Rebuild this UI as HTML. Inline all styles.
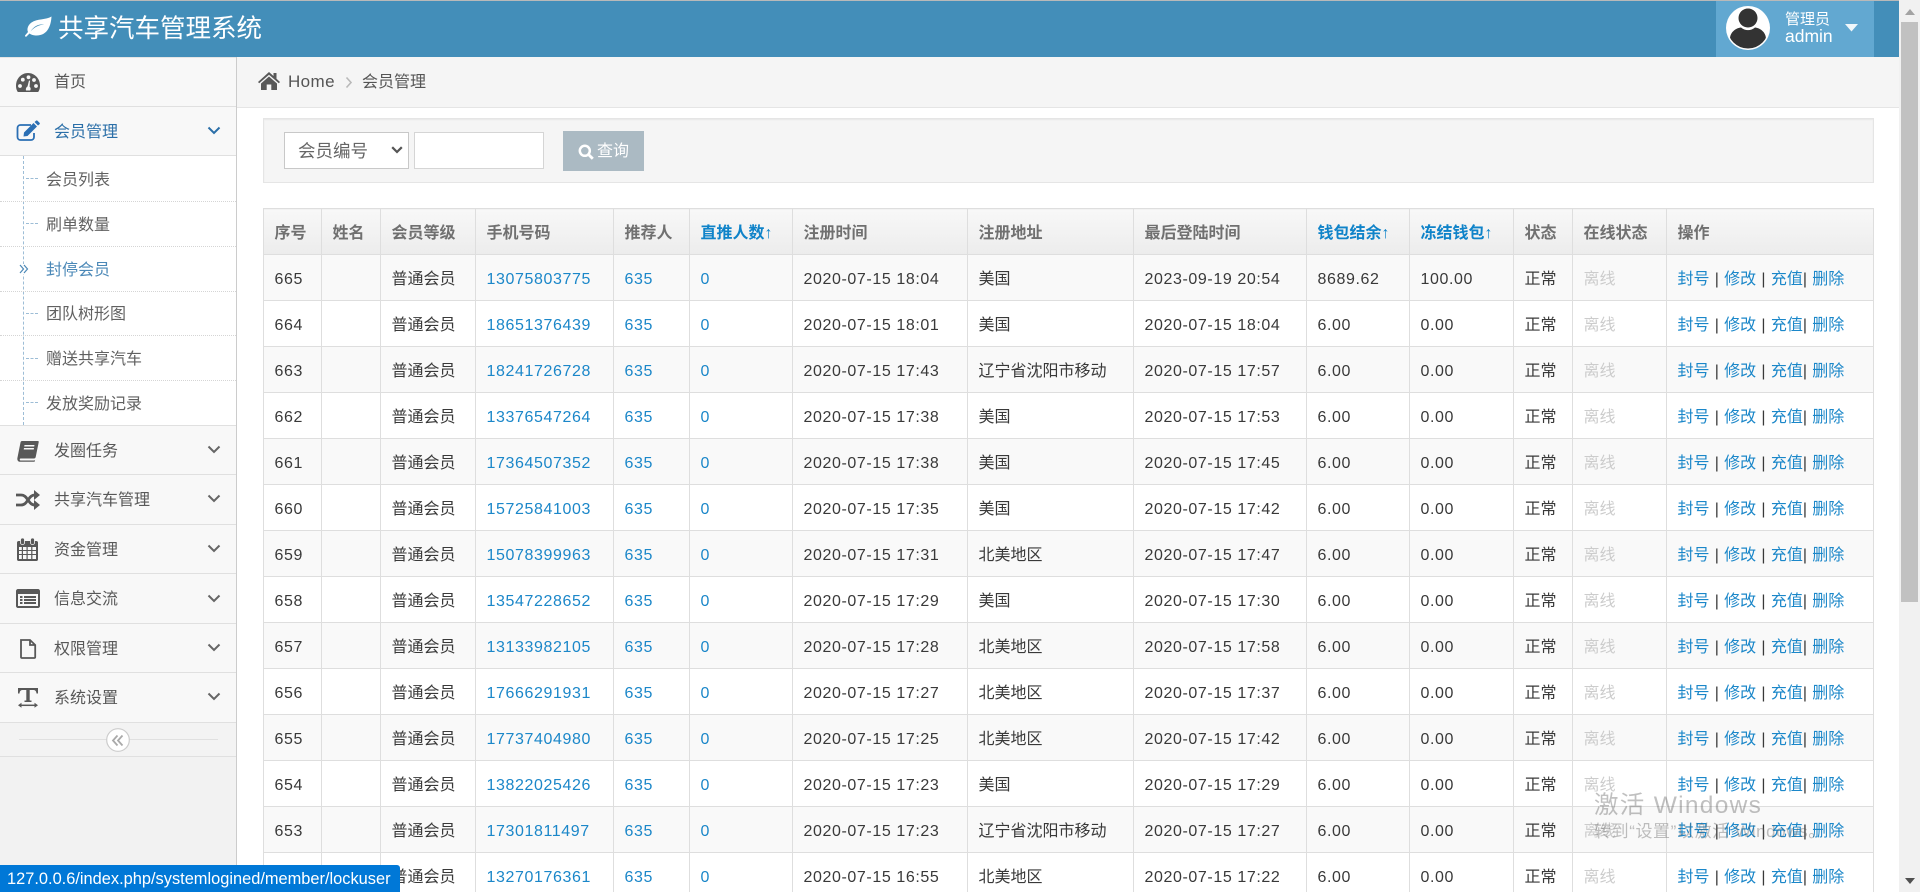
<!DOCTYPE html>
<html lang="zh-CN">
<head>
<meta charset="utf-8">
<title>共享汽车管理系统</title>
<style>
html,body{margin:0;padding:0;width:1920px;height:892px;overflow:hidden;background:#fff;}
body{position:relative;font-family:"Liberation Sans","Noto Sans CJK SC",sans-serif;font-size:16px;color:#393939;}
.a{position:absolute;white-space:nowrap;}
svg{position:absolute;display:block;overflow:visible;}
#nav{left:0;top:1px;width:1899px;height:56px;background:#438eb9;}
#topline{left:0;top:0;width:1899px;height:1px;background:#b9b9b9;}
#side{left:0;top:57px;width:236px;height:835px;background:#f2f2f2;border-right:1px solid #ccc;}
.mi{left:0;width:236px;background:#f8f8f8;border-bottom:1px solid #e0e0e0;box-sizing:content-box;}
.mt{left:54px;color:#585858;font-size:16px;line-height:24px;height:24px;}
.st{left:46px;color:#616161;font-size:16px;line-height:24px;height:24px;}
.dot{left:0;width:236px;height:0;border-top:1px dotted #d5d5d5;}
.dash{left:26px;width:12px;height:0;border-top:1px dashed #9dbdd6;}
#tbl{position:absolute;left:263px;top:208px;width:1610px;border-collapse:collapse;table-layout:fixed;}
#tbl th,#tbl td{border:1.5px solid #dedede;padding:0 0 0 10.5px;height:44.5px;text-align:left;white-space:nowrap;overflow:hidden;font-size:16px;line-height:22px;box-sizing:border-box;}
#tbl tr{height:46px;}
#tbl th{background:linear-gradient(#f8f8f8,#ececec);color:#707070;font-weight:bold;padding-top:4px;}
#tbl th.l{color:#0f83c9;}
#tbl td{letter-spacing:.6px;padding-top:4px;}
#tbl td:nth-child(3),#tbl td:nth-child(8),#tbl td:nth-child(12),#tbl td:nth-child(13){letter-spacing:0;}
#tbl tbody tr:nth-child(odd) td{background:#f9f9f9;}
#tbl a{color:#1b87c9;text-decoration:none;}
#tbl td.off{color:#ccc;}
#tbl td.op{letter-spacing:0;word-spacing:.8px;}
#tbl .op a{color:#1b87c9;}
</style>
</head>
<body>
<div class="a" id="topline"></div>
<div class="a" id="nav"></div>
<svg style="left:24px;top:15px" width="29" height="24" viewBox="0 0 29 24"><path d="M27.5 1.5C27 10 24 21 11.5 20.5 9 20.4 7 19.5 5.5 18.5L2.500 21.500C1.800 22.200 .5 21.300 1.200 20.300L4 17C2.800 14.500 3.500 10.500 7.500 7.500 13 3.500 22 5 27.500 1.500ZM6.500 16.500C11 11.500 15 10 20 9.500 15 9 10 11 6.500 16.500Z" fill="#fff" fill-rule="evenodd"/></svg>
<div class="a" style="left:58px;top:11px;font-size:25.5px;line-height:36px;color:#fff;">共享汽车管理系统</div>

<div class="a" style="left:1716px;top:1px;width:158px;height:56px;background:#62a8d1;"></div>
<svg style="left:1726px;top:6px" width="44" height="44" viewBox="0 0 44 44"><defs><clipPath id="av"><circle cx="22" cy="22" r="20.500"/></clipPath></defs><circle cx="22" cy="22" r="22" fill="#fff"/><g clip-path="url(#av)"><circle cx="22" cy="12" r="9.500" fill="#333"/><path d="M4 44V33C4 26 10 22 15 21.500C19 25 25 25 29 21.500C34 22 40 26 40 33V44Z" fill="#333"/></g></svg>
<div class="a" style="left:1785px;top:10px;font-size:15px;line-height:20px;color:#fff;">管理员</div>
<div class="a" style="left:1785px;top:26px;font-size:17.500px;line-height:20px;color:#fff;">admin</div>
<svg style="left:1845px;top:24px" width="13" height="8" viewBox="0 0 13 8"><path d="M0 0H13L6.500 7.500Z" fill="#fff" opacity=".9"/></svg>

<div class="a" id="side"></div>
<div class="a" style="left:0;top:57px;width:236px;height:1px;background:#e5e5e5;"></div>

<div class="a mi" style="top:58px;height:48px;"></div>
<div class="a mi" style="top:107px;height:48px;"></div>
<div class="a" style="left:0;top:156px;width:236px;height:269px;background:#fff;border-bottom:1px solid #e0e0e0;"></div>
<div class="a mi" style="top:426px;height:48px;"></div>
<div class="a mi" style="top:475px;height:49px;"></div>
<div class="a mi" style="top:525px;height:48px;"></div>
<div class="a mi" style="top:574px;height:49px;"></div>
<div class="a mi" style="top:624px;height:48px;"></div>
<div class="a mi" style="top:673px;height:49px;"></div>
<div class="a" style="left:0;top:723px;width:236px;height:33px;background:#f3f3f3;border-bottom:1px solid #e0e0e0;"></div>

<!-- tachometer -->
<svg style="left:16px;top:73px" width="24" height="20" viewBox="0 0 24 20"><path d="M1.800 19C.6 17 0 15.500 0 12.500 0 5.500 5.500 0 12 0S24 5.500 24 12.500C24 15.500 23.400 17 22.200 19Z" fill="#585858"/><circle cx="4" cy="13" r="1.900" fill="#f8f8f8"/><circle cx="6.800" cy="6.700" r="1.900" fill="#f8f8f8"/><circle cx="12.500" cy="4.300" r="1.900" fill="#f8f8f8"/><circle cx="18" cy="7" r="1.900" fill="#f8f8f8"/><circle cx="20" cy="13" r="1.900" fill="#f8f8f8"/><path d="M10 17.500C9.500 15.500 10.500 14 11.500 13.500L13 7.500 14 7.800 13.600 13.700C14.800 14.700 15 16 14.200 17.500Z" fill="#f8f8f8"/></svg>
<div class="a mt" style="top:71px;">首页</div>

<!-- edit -->
<svg style="left:16px;top:121px" width="24" height="20" viewBox="0 0 24 20"><path d="M15 4H4.500C2.800 4 1.500 5.300 1.500 7V16C1.500 17.700 2.800 19 4.500 19H15C16.700 19 18 17.700 18 16V12" fill="none" stroke="#2b6fb4" stroke-width="1.800"/><path d="M8 11.500 17.500 2 21 5.500 11.500 15 7.500 15.500Z" fill="#2b6fb4"/><path d="M18.500 1 20 -.3C20.500-.7 21-.7 21.500-.3L23.500 1.700C24 2.200 24 2.800 23.500 3.200L22 4.500Z" fill="#2b6fb4"/></svg>
<div class="a mt" style="top:121px;color:#2b6fa8;">会员管理</div>
<svg style="left:207px;top:126px" width="14" height="9" viewBox="0 0 14 9"><path d="M1.500 1.500 7 7 12.500 1.500" fill="none" stroke="#2b6fa8" stroke-width="2"/></svg>

<!-- submenu -->
<div class="a" style="left:23px;top:156px;width:0;height:269px;border-left:1px dashed #9dbdd6;"></div>
<div class="a dash" style="top:178px;"></div>
<div class="a dash" style="top:223px;"></div>
<div class="a dash" style="top:313px;"></div>
<div class="a dash" style="top:358px;"></div>
<div class="a dash" style="top:402px;"></div>
<div class="a dot" style="top:201px;"></div>
<div class="a dot" style="top:246px;"></div>
<div class="a dot" style="top:291px;"></div>
<div class="a dot" style="top:335px;"></div>
<div class="a dot" style="top:380px;"></div>
<div class="a st" style="top:169px;">会员列表</div>
<div class="a st" style="top:214px;">刷单数量</div>
<svg style="left:19px;top:264px;background:#fff" width="10" height="10" viewBox="0 0 10 10"><path d="M1 1 4.500 5 1 9M5 1 8.500 5 5 9" fill="none" stroke="#4b88b7" stroke-width="1.200"/></svg>
<div class="a st" style="top:259px;color:#4b88b7;">封停会员</div>
<div class="a st" style="top:303px;">团队树形图</div>
<div class="a st" style="top:348px;">赠送共享汽车</div>
<div class="a st" style="top:393px;">发放奖励记录</div>

<!-- book -->
<svg style="left:17px;top:441px" width="22" height="21" viewBox="0 0 22 21"><path d="M5 0H21C21.800 0 21.800 .8 21.700 1.300L18.700 16C18.500 17 17.800 17.500 17 17.500H3.500C2.500 17.500 2.500 19.500 3.500 19.500H17.500L18 19C18.200 20 17.800 20.800 17 20.800H3C1 20.800 0 19 .4 17L3.500 1.500C3.700 .6 4.200 0 5 0Z" fill="#585858"/><path d="M7.500 4H17.500L17.200 5.500H7.200ZM7 7H17L16.700 8.500H6.700Z" fill="#f8f8f8"/></svg>
<div class="a mt" style="top:440px;">发圈任务</div>
<svg style="left:207px;top:445px" width="14" height="9" viewBox="0 0 14 9"><path d="M1.500 1.500 7 7 12.500 1.500" fill="none" stroke="#666" stroke-width="2"/></svg>

<!-- random -->
<svg style="left:16px;top:490px" width="24" height="20" viewBox="0 0 24 20"><path d="M0 5H5C9 5 10.500 8 12 10S15 15 19 15" fill="none" stroke="#585858" stroke-width="2.800"/><path d="M0 15H5C9 15 10.500 12 12 10S15 5 19 5" fill="none" stroke="#585858" stroke-width="2.800"/><path d="M18 0 24 5 18 10ZM18 10 24 15 18 20Z" fill="#585858"/></svg>
<div class="a mt" style="top:489px;">共享汽车管理</div>
<svg style="left:207px;top:494px" width="14" height="9" viewBox="0 0 14 9"><path d="M1.500 1.500 7 7 12.500 1.500" fill="none" stroke="#666" stroke-width="2"/></svg>

<!-- calendar -->
<svg style="left:17px;top:538px" width="22" height="23" viewBox="0 0 22 23"><path d="M1.500 3H19.500C20.300 3 21 3.700 21 4.500V21.500C21 22.300 20.300 23 19.500 23H1.500C.7 23 0 22.300 0 21.500V4.500C0 3.700 .7 3 1.500 3Z" fill="#585858"/><path d="M2 9H4.800V12H2ZM6 9H9.500V12H6ZM10.700 9H14.200V12H10.700ZM15.400 9H19V12H15.400ZM2 13H4.800V16H2ZM6 13H9.500V16H6ZM10.700 13H14.200V16H10.700ZM15.400 13H19V16H15.400ZM2 17H4.800V21H2ZM6 17H9.500V21H6ZM10.700 17H14.200V21H10.700ZM15.400 17H19V21H15.400Z" fill="#f8f8f8"/><rect x="3.500" y="0" width="4" height="6.500" rx="1.800" fill="#585858" stroke="#f8f8f8" stroke-width=".8"/><rect x="13.500" y="0" width="4" height="6.500" rx="1.800" fill="#585858" stroke="#f8f8f8" stroke-width=".8"/></svg>
<div class="a mt" style="top:539px;">资金管理</div>
<svg style="left:207px;top:544px" width="14" height="9" viewBox="0 0 14 9"><path d="M1.500 1.500 7 7 12.500 1.500" fill="none" stroke="#666" stroke-width="2"/></svg>

<!-- list-alt -->
<svg style="left:16px;top:589px" width="24" height="19" viewBox="0 0 24 19"><path d="M2 0H22C23.100 0 24 .9 24 2V17C24 18.100 23.100 19 22 19H2C.9 19 0 18.100 0 17V2C0 .9 .9 0 2 0Z" fill="#585858"/><rect x="2" y="5" width="20" height="12" fill="#f8f8f8"/><path d="M4 7H6.500V9H4ZM4 10H6.500V12H4ZM4 13H6.500V15H4ZM8 7H20V9H8ZM8 10H20V12H8ZM8 13H20V15H8Z" fill="#585858"/></svg>
<div class="a mt" style="top:588px;">信息交流</div>
<svg style="left:207px;top:594px" width="14" height="9" viewBox="0 0 14 9"><path d="M1.500 1.500 7 7 12.500 1.500" fill="none" stroke="#666" stroke-width="2"/></svg>

<!-- file-o -->
<svg style="left:20px;top:639px" width="16" height="20" viewBox="0 0 16 20"><path d="M1 1H10L15.200 6V18C15.200 18.600 14.800 19 14.200 19H2C1.400 19 1 18.600 1 18ZM10 1V6H15.200" fill="none" stroke="#585858" stroke-width="1.800"/></svg>
<div class="a mt" style="top:638px;">权限管理</div>
<svg style="left:207px;top:643px" width="14" height="9" viewBox="0 0 14 9"><path d="M1.500 1.500 7 7 12.500 1.500" fill="none" stroke="#666" stroke-width="2"/></svg>

<!-- text-width -->
<svg style="left:18px;top:688px" width="20" height="20" viewBox="0 0 20 20"><path d="M0 0H20V5.500H18.500C18.300 3.500 17.500 2 15.500 2H11.700V12.500H13.500V14H6.500V12.500H8.300V2H4.500C2.500 2 1.700 3.500 1.500 5.500H0Z" fill="#585858"/><path d="M2 17.300H18" stroke="#585858" stroke-width="1.500"/><path d="M0 17.300 3.500 14.800V19.800ZM20 17.300 16.500 14.800V19.800Z" fill="#585858"/></svg>
<div class="a mt" style="top:687px;">系统设置</div>
<svg style="left:207px;top:692px" width="14" height="9" viewBox="0 0 14 9"><path d="M1.500 1.500 7 7 12.500 1.500" fill="none" stroke="#666" stroke-width="2"/></svg>

<!-- collapse -->
<div class="a" style="left:19px;top:739px;width:199px;height:1px;background:#e0e0e0;"></div>
<svg style="left:106px;top:728px" width="24" height="24" viewBox="0 0 24 24"><circle cx="12" cy="12" r="11.300" fill="#fff" stroke="#ccc" stroke-width="1.200"/><path d="M11.500 7.500 7 12.500 11.500 17.500M16.500 7.500 12 12.500 16.500 17.500" fill="none" stroke="#aaa" stroke-width="1.800"/></svg>

<!-- breadcrumb -->
<div class="a" style="left:237px;top:57px;width:1662px;height:50px;background:#f5f5f5;border-bottom:1px solid #e5e5e5;"></div>
<svg style="left:258px;top:72px" width="22" height="18" viewBox="0 0 22 18"><path d="M11 0 15.500 4V1H18.500V6.700L22 10 20.800 11.300 11 2.700 1.200 11.300 0 10Z" fill="#585858"/><path d="M11 4.500 19 11.500V18H13.300V12.500H8.700V18H3V11.500Z" fill="#585858"/></svg>
<div class="a" style="left:288px;top:70px;font-size:17px;line-height:24px;color:#555;letter-spacing:.4px;">Home</div>
<svg style="left:345px;top:76px" width="8" height="13" viewBox="0 0 8 13"><path d="M1.500 1.500 6 6.500 1.500 11.500" fill="none" stroke="#b9b9b9" stroke-width="1.600"/></svg>
<div class="a" style="left:362px;top:71px;font-size:16px;line-height:24px;color:#555;">会员管理</div>

<!-- search panel -->
<div class="a" style="left:263px;top:118px;width:1611px;height:65px;background:#f5f5f5;border:1px solid #e5e5e5;box-sizing:border-box;box-shadow:inset 0 1px 1px #e8e8e8;"></div>
<div class="a" style="left:284px;top:132px;width:125px;height:37px;background:#fff;border:1px solid #c8c8c8;box-sizing:border-box;"></div>
<div class="a" style="left:298px;top:139px;font-size:17.500px;line-height:25px;color:#666;">会员编号</div>
<svg style="left:391px;top:146px" width="12" height="8" viewBox="0 0 12 8"><path d="M1.200 1.200 6 6 10.800 1.200" fill="none" stroke="#555" stroke-width="2.200"/></svg>
<div class="a" style="left:414px;top:132px;width:130px;height:37px;background:#fff;border:1px solid #d5d5d5;box-sizing:border-box;"></div>
<div class="a" style="left:563px;top:131px;width:81px;height:40px;background:#abbac3;"></div>
<svg style="left:578px;top:144px" width="16" height="16" viewBox="0 0 16 16"><circle cx="6.800" cy="6.800" r="5" fill="none" stroke="#fff" stroke-width="2.500"/><path d="M10.500 10.500 14.800 14.800" stroke="#fff" stroke-width="2.800"/></svg>
<div class="a" style="left:597px;top:140px;font-size:16px;line-height:24px;color:#fff;">查询</div>

<!-- table -->
<table id="tbl">
<colgroup><col style="width:58px"><col style="width:59px"><col style="width:95px"><col style="width:138px"><col style="width:76px"><col style="width:103px"><col style="width:175px"><col style="width:166px"><col style="width:173px"><col style="width:103px"><col style="width:104px"><col style="width:59px"><col style="width:94px"><col style="width:207px"></colgroup>
<thead><tr><th>序号</th><th>姓名</th><th>会员等级</th><th>手机号码</th><th>推荐人</th><th class="l">直推人数↑</th><th>注册时间</th><th>注册地址</th><th>最后登陆时间</th><th class="l">钱包结余↑</th><th class="l">冻结钱包↑</th><th>状态</th><th>在线状态</th><th>操作</th></tr></thead>
<tbody>
<tr><td>665</td><td></td><td>普通会员</td><td><a>13075803775</a></td><td><a>635</a></td><td><a>0</a></td><td>2020-07-15 18:04</td><td>美国</td><td>2023-09-19 20:54</td><td>8689.62</td><td>100.00</td><td>正常</td><td class="off">离线</td><td class="op"><a>封号</a> | <a>修改</a> | <a>充值</a>| <a>删除</a></td></tr>
<tr><td>664</td><td></td><td>普通会员</td><td><a>18651376439</a></td><td><a>635</a></td><td><a>0</a></td><td>2020-07-15 18:01</td><td>美国</td><td>2020-07-15 18:04</td><td>6.00</td><td>0.00</td><td>正常</td><td class="off">离线</td><td class="op"><a>封号</a> | <a>修改</a> | <a>充值</a>| <a>删除</a></td></tr>
<tr><td>663</td><td></td><td>普通会员</td><td><a>18241726728</a></td><td><a>635</a></td><td><a>0</a></td><td>2020-07-15 17:43</td><td>辽宁省沈阳市移动</td><td>2020-07-15 17:57</td><td>6.00</td><td>0.00</td><td>正常</td><td class="off">离线</td><td class="op"><a>封号</a> | <a>修改</a> | <a>充值</a>| <a>删除</a></td></tr>
<tr><td>662</td><td></td><td>普通会员</td><td><a>13376547264</a></td><td><a>635</a></td><td><a>0</a></td><td>2020-07-15 17:38</td><td>美国</td><td>2020-07-15 17:53</td><td>6.00</td><td>0.00</td><td>正常</td><td class="off">离线</td><td class="op"><a>封号</a> | <a>修改</a> | <a>充值</a>| <a>删除</a></td></tr>
<tr><td>661</td><td></td><td>普通会员</td><td><a>17364507352</a></td><td><a>635</a></td><td><a>0</a></td><td>2020-07-15 17:38</td><td>美国</td><td>2020-07-15 17:45</td><td>6.00</td><td>0.00</td><td>正常</td><td class="off">离线</td><td class="op"><a>封号</a> | <a>修改</a> | <a>充值</a>| <a>删除</a></td></tr>
<tr><td>660</td><td></td><td>普通会员</td><td><a>15725841003</a></td><td><a>635</a></td><td><a>0</a></td><td>2020-07-15 17:35</td><td>美国</td><td>2020-07-15 17:42</td><td>6.00</td><td>0.00</td><td>正常</td><td class="off">离线</td><td class="op"><a>封号</a> | <a>修改</a> | <a>充值</a>| <a>删除</a></td></tr>
<tr><td>659</td><td></td><td>普通会员</td><td><a>15078399963</a></td><td><a>635</a></td><td><a>0</a></td><td>2020-07-15 17:31</td><td>北美地区</td><td>2020-07-15 17:47</td><td>6.00</td><td>0.00</td><td>正常</td><td class="off">离线</td><td class="op"><a>封号</a> | <a>修改</a> | <a>充值</a>| <a>删除</a></td></tr>
<tr><td>658</td><td></td><td>普通会员</td><td><a>13547228652</a></td><td><a>635</a></td><td><a>0</a></td><td>2020-07-15 17:29</td><td>美国</td><td>2020-07-15 17:30</td><td>6.00</td><td>0.00</td><td>正常</td><td class="off">离线</td><td class="op"><a>封号</a> | <a>修改</a> | <a>充值</a>| <a>删除</a></td></tr>
<tr><td>657</td><td></td><td>普通会员</td><td><a>13133982105</a></td><td><a>635</a></td><td><a>0</a></td><td>2020-07-15 17:28</td><td>北美地区</td><td>2020-07-15 17:58</td><td>6.00</td><td>0.00</td><td>正常</td><td class="off">离线</td><td class="op"><a>封号</a> | <a>修改</a> | <a>充值</a>| <a>删除</a></td></tr>
<tr><td>656</td><td></td><td>普通会员</td><td><a>17666291931</a></td><td><a>635</a></td><td><a>0</a></td><td>2020-07-15 17:27</td><td>北美地区</td><td>2020-07-15 17:37</td><td>6.00</td><td>0.00</td><td>正常</td><td class="off">离线</td><td class="op"><a>封号</a> | <a>修改</a> | <a>充值</a>| <a>删除</a></td></tr>
<tr><td>655</td><td></td><td>普通会员</td><td><a>17737404980</a></td><td><a>635</a></td><td><a>0</a></td><td>2020-07-15 17:25</td><td>北美地区</td><td>2020-07-15 17:42</td><td>6.00</td><td>0.00</td><td>正常</td><td class="off">离线</td><td class="op"><a>封号</a> | <a>修改</a> | <a>充值</a>| <a>删除</a></td></tr>
<tr><td>654</td><td></td><td>普通会员</td><td><a>13822025426</a></td><td><a>635</a></td><td><a>0</a></td><td>2020-07-15 17:23</td><td>美国</td><td>2020-07-15 17:29</td><td>6.00</td><td>0.00</td><td>正常</td><td class="off">离线</td><td class="op"><a>封号</a> | <a>修改</a> | <a>充值</a>| <a>删除</a></td></tr>
<tr><td>653</td><td></td><td>普通会员</td><td><a>17301811497</a></td><td><a>635</a></td><td><a>0</a></td><td>2020-07-15 17:23</td><td>辽宁省沈阳市移动</td><td>2020-07-15 17:27</td><td>6.00</td><td>0.00</td><td>正常</td><td class="off">离线</td><td class="op"><a>封号</a> | <a>修改</a> | <a>充值</a>| <a>删除</a></td></tr>
<tr><td>652</td><td></td><td>普通会员</td><td><a>13270176361</a></td><td><a>635</a></td><td><a>0</a></td><td>2020-07-15 16:55</td><td>北美地区</td><td>2020-07-15 17:22</td><td>6.00</td><td>0.00</td><td>正常</td><td class="off">离线</td><td class="op"><a>封号</a> | <a>修改</a> | <a>充值</a>| <a>删除</a></td></tr>
</tbody>
</table>

<!-- scrollbar -->
<div class="a" style="left:1899px;top:0;width:21px;height:892px;background:#f1f1f1;"></div>
<div class="a" style="left:1901px;top:22px;width:17px;height:580px;background:#c1c1c1;"></div>
<svg style="left:1905px;top:9px" width="10" height="6" viewBox="0 0 10 6"><path d="M5 0 10 6H0Z" fill="#a3a3a3"/></svg>
<svg style="left:1905px;top:878px" width="10" height="6" viewBox="0 0 10 6"><path d="M0 0H10L5 6Z" fill="#505050"/></svg>

<!-- watermark -->
<div class="a" style="left:1594px;top:789px;font-size:24.500px;line-height:34px;color:rgba(90,90,90,.38);letter-spacing:1.300px;">激活 Windows</div>
<div class="a" style="left:1594px;top:820px;font-size:17px;line-height:24px;color:rgba(90,90,90,.38);letter-spacing:.6px;">转到“设置”以激活 Windows。</div>

<!-- status bar -->
<div class="a" style="left:0;top:865px;width:400px;height:27px;background:#0078d7;border-top-right-radius:3px;color:#fff;font-size:16.400px;line-height:28px;padding-left:7px;box-sizing:border-box;">127.0.0.6/index.php/systemlogined/member/lockuser</div>
</body>
</html>
